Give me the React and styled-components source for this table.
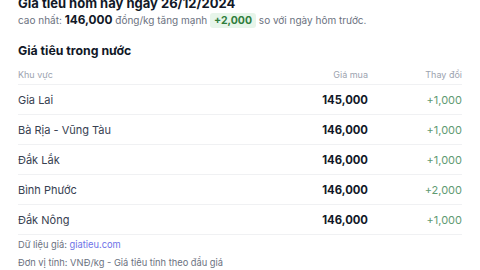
import React from "react";
import styled, { createGlobalStyle } from "styled-components";

const Global = createGlobalStyle`
  body {
    margin: 0;
    background: #fff;
    font-family: Inter, "Noto Sans", sans-serif;
  }
`;

const Page = styled.div`
  padding: 0 18px;
  margin-top: -6px;
`;

const Title = styled.h1`
  margin: 0;
  font-size: 13px;
  line-height: 18px;
  font-weight: 700;
  color: #111827;
`;

const Summary = styled.p`
  margin: -1px 0 0;
  font-size: 10px;
  line-height: 18px;
  color: #6b7280;
`;

const Strong = styled.strong`
  font-size: 11.8px;
  font-weight: 700;
  color: #111827;
`;

const Badge = styled.span`
  display: inline-block;
  padding: 0 4px;
  border-radius: 3px;
  background: #e7f5ea;
  color: #2f7d3c;
  font-weight: 700;
  font-size: 10.5px;
  line-height: 15px;
`;

const Heading = styled.h2`
  margin: 13px 0 0;
  font-size: 12.3px;
  line-height: 18px;
  font-weight: 700;
  color: #111827;
`;

const Table = styled.table`
  width: 100%;
  margin-top: 5px;
  border-collapse: collapse;
`;

const Th = styled.th`
  text-align: ${p => (p.$right ? "right" : "left")};
  font-size: 9px;
  font-weight: 400;
  color: #9ca3af;
  height: 19px;
  padding: 0;
  border-bottom: 1px solid #f0f1f3;
`;

const Td = styled.td`
  height: 29px;
  padding: 0;
  text-align: ${p => (p.$right ? "right" : "left")};
  font-size: ${p => (p.$bold ? "11.3px" : "11px")};
  font-weight: ${p => (p.$bold ? 700 : 400)};
  color: ${p => p.$color || "#374151"};
  border-bottom: 1px solid #f0f1f3;
`;

const Footer = styled.div`
  margin-top: 1px;
  font-size: 9.3px;
  line-height: 18px;
  color: #6b7280;
`;

const Link = styled.a`
  color: #6d72e8;
  text-decoration: none;
`;

const rows = [
  ["Gia Lai", "145,000", "+1,000"],
  ["Bà Rịa - Vũng Tàu", "146,000", "+1,000"],
  ["Đắk Lắk", "146,000", "+1,000"],
  ["Bình Phước", "146,000", "+2,000"],
  ["Đắk Nông", "146,000", "+1,000"]
];

export default function App() {
  return (
    <Page>
      <Global />
      <Title>Giá tiêu hôm nay ngày 26/12/2024</Title>
      <Summary>
        cao nhất: <Strong>146,000</Strong> đồng/kg tăng mạnh <Badge>+2,000</Badge> so với ngày hôm trước.
      </Summary>
      <Heading>Giá tiêu trong nước</Heading>
      <Table>
        <thead>
          <tr>
            <Th>Khu vực</Th>
            <Th $right>Giá mua</Th>
            <Th $right style={{ width: 94 }}>Thay đổi</Th>
          </tr>
        </thead>
        <tbody>
          {rows.map(([name, price, change]) => (
            <tr key={name}>
              <Td>{name}</Td>
              <Td $right $bold $color="#111827">{price}</Td>
              <Td $right $color="#5f9a72">{change}</Td>
            </tr>
          ))}
        </tbody>
      </Table>
      <Footer>
        <div>
          Dữ liệu giá: <Link href="#">giatieu.com</Link>
        </div>
        <div>Đơn vị tính: VNĐ/kg - Giá tiêu tính theo đầu giá</div>
      </Footer>
    </Page>
  );
}
